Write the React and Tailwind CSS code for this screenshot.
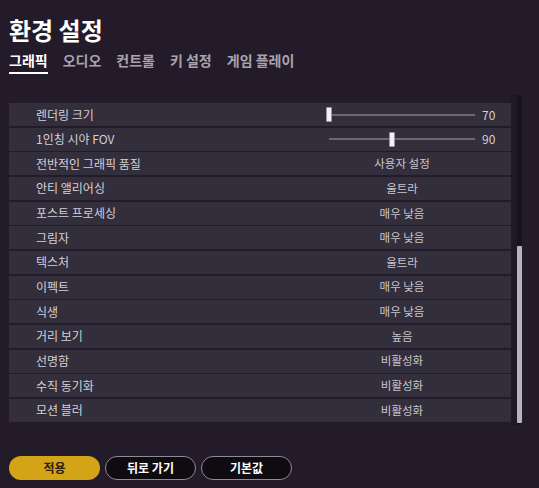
import React from "react";

const rows = [
  { label: "렌더링 크기", slider: 0, value: "70" },
  { label: "1인칭 시야 FOV", slider: 43, value: "90" },
  { label: "전반적인 그래픽 품질", value: "사용자 설정" },
  { label: "안티 앨리어싱", value: "울트라" },
  { label: "포스트 프로세싱", value: "매우 낮음" },
  { label: "그림자", value: "매우 낮음" },
  { label: "텍스처", value: "울트라" },
  { label: "이펙트", value: "매우 낮음" },
  { label: "식생", value: "매우 낮음" },
  { label: "거리 보기", value: "높음" },
  { label: "선명함", value: "비활성화" },
  { label: "수직 동기화", value: "비활성화" },
  { label: "모션 블러", value: "비활성화" },
];

const tabs = ["그래픽", "오디오", "컨트롤", "키 설정", "게임 플레이"];

const SettingRow = ({ row }) => (
  <div className="h-[23px] flex items-center bg-[#332e3b] text-[12px]">
    <div className="flex-1 pl-[27px] text-[#d4d0d8]">{row.label}</div>
    {row.slider !== undefined ? (
      <>
        <div className="w-[146px] h-full relative flex items-center">
          <div className="w-full h-[2px] bg-[#6c6773]" />
          <div
            className="absolute top-[4px] w-[6px] h-[15px] rounded-[1px] bg-[#f2f0f4] border border-[#9a96a0]"
            style={{ left: `calc(${row.slider}% - 3px)` }}
          />
        </div>
        <div className="w-[36px] pl-[7px] text-[#d4d0d8]">{row.value}</div>
      </>
    ) : (
      <>
        <div className="w-[146px] text-center text-[#cac6ce] text-[11.5px]">{row.value}</div>
        <div className="w-[36px]" />
      </>
    )}
  </div>
);

const App = () => {
  return (
    <div className="w-[539px] h-[488px] overflow-hidden bg-[#231b2a] font-['Noto_Sans_CJK_KR','Noto_Sans',sans-serif]">
      <div className="pl-[9px]">
        <h1 className="mt-[15px] h-[30px] leading-[30px] text-[24px] font-bold text-white">환경 설정</h1>
        <div className="mt-[5px] flex gap-[15px]">
          {tabs.map((t, i) => (
            <div key={t} className="flex flex-col">
              <span
                className={`h-[20px] leading-[20px] text-[14px] font-bold ${
                  i === 0 ? "text-white" : "text-[#a8a3ad]"
                }`}
              >
                {t}
              </span>
              <div className={`mt-[2px] h-[2px] ${i === 0 ? "bg-white" : "bg-transparent"}`} />
            </div>
          ))}
        </div>
      </div>

      <div className="mt-[21px] flex pl-[9px] h-[330px]">
        <div className="w-[502px] pt-[8px] flex flex-col gap-[1.67px]">
          {rows.map((r) => (
            <SettingRow key={r.label} row={r} />
          ))}
        </div>
        <div className="w-[6px] bg-[#1f1a25]" />
        <div className="w-[5px] bg-[#17131b] flex flex-col justify-end pb-[2px]">
          <div className="h-[177px] bg-[#b9b2c2] rounded-[1px]" />
        </div>
      </div>

      <div className="mt-[31px] pl-[9px] flex gap-[5px]">
        <button className="w-[91px] h-[24px] rounded-full bg-[#d3a418] text-[#2a2012] text-[12px] font-bold">
          적용
        </button>
        <button className="w-[91px] h-[24px] rounded-full bg-[#0e0c11] border-[1.5px] border-[#8f8a95] text-white text-[12px] font-bold">
          뒤로 가기
        </button>
        <button className="w-[91px] h-[24px] rounded-full bg-[#0e0c11] border-[1.5px] border-[#8f8a95] text-white text-[12px] font-bold">
          기본값
        </button>
      </div>
    </div>
  );
};

export default App;
